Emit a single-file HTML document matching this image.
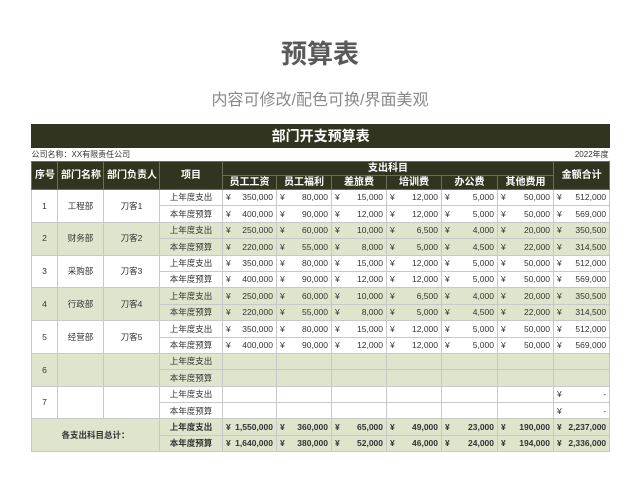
<!DOCTYPE html>
<html><head><meta charset="utf-8"><style>
*{margin:0;padding:0;box-sizing:border-box}
body{width:640px;height:485px;background:#fff;font-family:"Liberation Sans","Noto Sans CJK SC",sans-serif;position:relative;overflow:hidden}
.t1{position:absolute;top:34px;left:0;width:640px;text-align:center;font-size:26px;color:#595959;font-weight:bold}
.t2{position:absolute;top:86px;left:0;width:640px;text-align:center;font-size:16px;color:#8a8a8a}
table{position:absolute;left:31px;top:124px;border-collapse:collapse;table-layout:fixed;width:578px;font-size:8.5px;color:#333;line-height:1}
td{border:1px solid #c8c8c8;height:16.4px;text-align:center;white-space:nowrap;overflow:hidden;padding:0 3px}
.title td{background:#31351f;color:#fff;font-size:14px;font-weight:bold;height:23px;border-color:#31351f}
.co td{height:14px;border:none;font-size:8px}
.h td{background:#31351f;color:#fff;font-weight:bold;font-size:10px;height:14px;border-color:#6a6e5a}
.g td{background:#dfe4cc}
.m{text-align:right}
.m span{float:left}
.b td{font-weight:bold}
</style></head><body>
<div class="t1">预算表</div>
<div class="t2">内容可修改/配色可换/界面美观</div>
<table>
<colgroup><col style="width:26px"><col style="width:46px"><col style="width:56px"><col style="width:63px"><col style="width:54px"><col style="width:55px"><col style="width:55px"><col style="width:55px"><col style="width:56px"><col style="width:56px"><col style="width:56px"></colgroup>
<tr class="title"><td colspan="11">部门开支预算表</td></tr>
<tr class="co"><td colspan="4" style="text-align:left;padding:0">公司名称：XX有限责任公司</td><td colspan="7" style="text-align:right;padding:0 1px">2022年度</td></tr>
<tr class="h"><td rowspan="2">序号</td><td rowspan="2">部门名称</td><td rowspan="2">部门负责人</td><td rowspan="2">项目</td><td colspan="6">支出科目</td><td rowspan="2">金额合计</td></tr>
<tr class="h"><td>员工工资</td><td>员工福利</td><td>差旅费</td><td>培训费</td><td>办公费</td><td>其他费用</td></tr>
<tr><td rowspan="2">1</td><td rowspan="2">工程部</td><td rowspan="2">刀客1</td><td>上年度支出</td><td class="m"><span>¥</span>350,000</td><td class="m"><span>¥</span>80,000</td><td class="m"><span>¥</span>15,000</td><td class="m"><span>¥</span>12,000</td><td class="m"><span>¥</span>5,000</td><td class="m"><span>¥</span>50,000</td><td class="m"><span>¥</span>512,000</td></tr>
<tr><td>本年度预算</td><td class="m"><span>¥</span>400,000</td><td class="m"><span>¥</span>90,000</td><td class="m"><span>¥</span>12,000</td><td class="m"><span>¥</span>12,000</td><td class="m"><span>¥</span>5,000</td><td class="m"><span>¥</span>50,000</td><td class="m"><span>¥</span>569,000</td></tr>
<tr class="g"><td rowspan="2">2</td><td rowspan="2">财务部</td><td rowspan="2">刀客2</td><td>上年度支出</td><td class="m"><span>¥</span>250,000</td><td class="m"><span>¥</span>60,000</td><td class="m"><span>¥</span>10,000</td><td class="m"><span>¥</span>6,500</td><td class="m"><span>¥</span>4,000</td><td class="m"><span>¥</span>20,000</td><td class="m"><span>¥</span>350,500</td></tr>
<tr class="g"><td>本年度预算</td><td class="m"><span>¥</span>220,000</td><td class="m"><span>¥</span>55,000</td><td class="m"><span>¥</span>8,000</td><td class="m"><span>¥</span>5,000</td><td class="m"><span>¥</span>4,500</td><td class="m"><span>¥</span>22,000</td><td class="m"><span>¥</span>314,500</td></tr>
<tr><td rowspan="2">3</td><td rowspan="2">采购部</td><td rowspan="2">刀客3</td><td>上年度支出</td><td class="m"><span>¥</span>350,000</td><td class="m"><span>¥</span>80,000</td><td class="m"><span>¥</span>15,000</td><td class="m"><span>¥</span>12,000</td><td class="m"><span>¥</span>5,000</td><td class="m"><span>¥</span>50,000</td><td class="m"><span>¥</span>512,000</td></tr>
<tr><td>本年度预算</td><td class="m"><span>¥</span>400,000</td><td class="m"><span>¥</span>90,000</td><td class="m"><span>¥</span>12,000</td><td class="m"><span>¥</span>12,000</td><td class="m"><span>¥</span>5,000</td><td class="m"><span>¥</span>50,000</td><td class="m"><span>¥</span>569,000</td></tr>
<tr class="g"><td rowspan="2">4</td><td rowspan="2">行政部</td><td rowspan="2">刀客4</td><td>上年度支出</td><td class="m"><span>¥</span>250,000</td><td class="m"><span>¥</span>60,000</td><td class="m"><span>¥</span>10,000</td><td class="m"><span>¥</span>6,500</td><td class="m"><span>¥</span>4,000</td><td class="m"><span>¥</span>20,000</td><td class="m"><span>¥</span>350,500</td></tr>
<tr class="g"><td>本年度预算</td><td class="m"><span>¥</span>220,000</td><td class="m"><span>¥</span>55,000</td><td class="m"><span>¥</span>8,000</td><td class="m"><span>¥</span>5,000</td><td class="m"><span>¥</span>4,500</td><td class="m"><span>¥</span>22,000</td><td class="m"><span>¥</span>314,500</td></tr>
<tr><td rowspan="2">5</td><td rowspan="2">经营部</td><td rowspan="2">刀客5</td><td>上年度支出</td><td class="m"><span>¥</span>350,000</td><td class="m"><span>¥</span>80,000</td><td class="m"><span>¥</span>15,000</td><td class="m"><span>¥</span>12,000</td><td class="m"><span>¥</span>5,000</td><td class="m"><span>¥</span>50,000</td><td class="m"><span>¥</span>512,000</td></tr>
<tr><td>本年度预算</td><td class="m"><span>¥</span>400,000</td><td class="m"><span>¥</span>90,000</td><td class="m"><span>¥</span>12,000</td><td class="m"><span>¥</span>12,000</td><td class="m"><span>¥</span>5,000</td><td class="m"><span>¥</span>50,000</td><td class="m"><span>¥</span>569,000</td></tr>
<tr class="g"><td rowspan="2">6</td><td rowspan="2"></td><td rowspan="2"></td><td>上年度支出</td><td></td><td></td><td></td><td></td><td></td><td></td><td></td></tr>
<tr class="g"><td>本年度预算</td><td></td><td></td><td></td><td></td><td></td><td></td><td></td></tr>
<tr><td rowspan="2">7</td><td rowspan="2"></td><td rowspan="2"></td><td>上年度支出</td><td></td><td></td><td></td><td></td><td></td><td></td><td class="m"><span>¥</span>-</td></tr>
<tr><td>本年度预算</td><td></td><td></td><td></td><td></td><td></td><td></td><td class="m"><span>¥</span>-</td></tr>
<tr class="g b"><td colspan="3" rowspan="2">各支出科目总计：</td><td>上年度支出</td><td class="m"><span>¥</span>1,550,000</td><td class="m"><span>¥</span>360,000</td><td class="m"><span>¥</span>65,000</td><td class="m"><span>¥</span>49,000</td><td class="m"><span>¥</span>23,000</td><td class="m"><span>¥</span>190,000</td><td class="m"><span>¥</span>2,237,000</td></tr>
<tr class="g b"><td>本年度预算</td><td class="m"><span>¥</span>1,640,000</td><td class="m"><span>¥</span>380,000</td><td class="m"><span>¥</span>52,000</td><td class="m"><span>¥</span>46,000</td><td class="m"><span>¥</span>24,000</td><td class="m"><span>¥</span>194,000</td><td class="m"><span>¥</span>2,336,000</td></tr>
</table>
</body></html>
